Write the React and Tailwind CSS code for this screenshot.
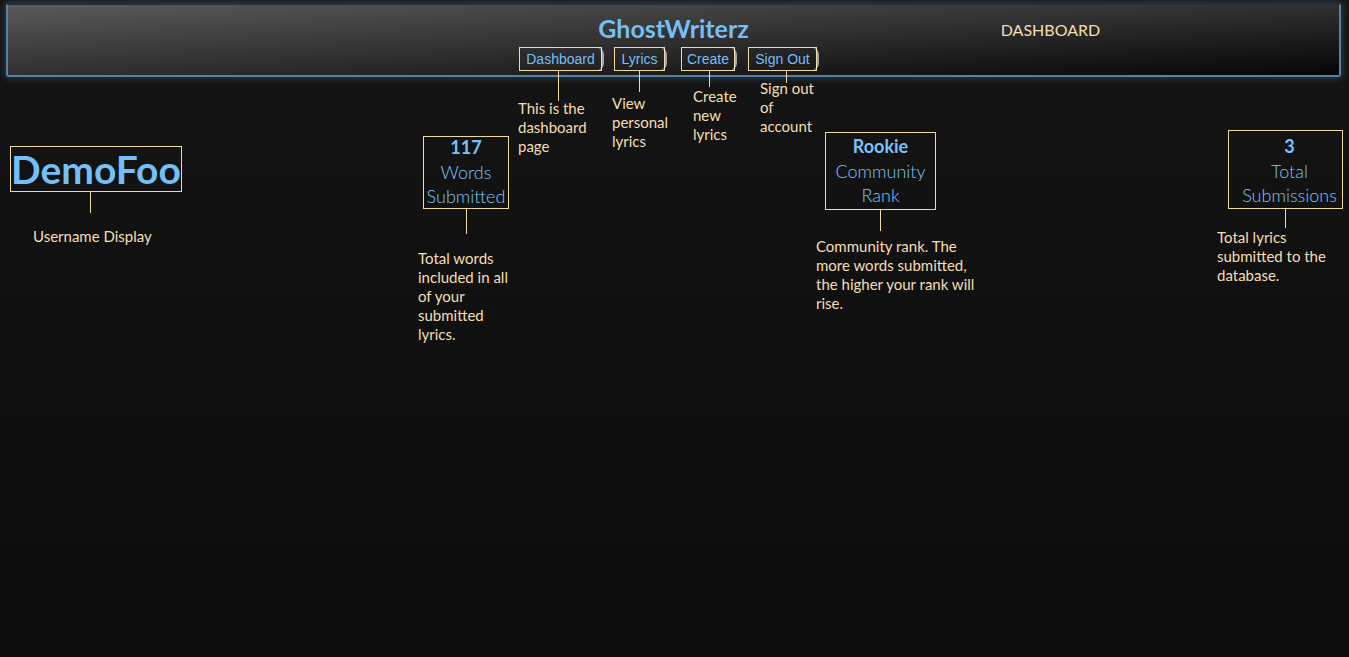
import React from 'react'

const body = { fontFamily: 'Lato, "Open Sans", sans-serif' }
const arial = { fontFamily: '"Liberation Sans", Arial, sans-serif' }

const navItems = [
  { label: 'Dashboard', tip: 'This is the dashboard page', col: 'w-[83px]', line: 'h-[30px] mr-[4px]', tipClass: 'ml-[-1px] w-[74px] mt-[-2px]' },
  { label: 'Lyrics', tip: 'View personal lyrics', col: 'w-[51px] ml-[12px]', line: 'h-[21px]', tipClass: 'ml-[-2px] w-[64px] mt-[2px]' },
  { label: 'Create', tip: 'Create new lyrics', col: 'w-[54px] ml-[16px]', line: 'h-[16px] ml-[2px]', tipClass: 'ml-[12px] w-[54px] mt-0' },
  { label: 'Sign Out', tip: 'Sign out of account', col: 'w-[69px] ml-[13px]', line: 'h-[12px] ml-[8px]', tipClass: 'ml-[12px] w-[60px] mt-[-4px]' },
]

const NavItem = ({ item }) => (
  <div className={`flex flex-col items-start shrink-0 ${item.col}`}>
    <div className="relative w-full h-[24px] border border-[#f1d9a6] flex items-center justify-center text-[14px] text-[#74bff5]" style={arial}>
      {item.label}
      <span className="absolute right-[-3px] top-[-1px] bottom-[-1px] w-[8px] rounded-r-full border-r-2 border-white/60" />
    </div>
    <div className="self-stretch flex justify-center">
      <div className={`w-px bg-[#f1d9a6] ${item.line}`} />
    </div>
    <p className={`shrink-0 text-[15px] leading-[19px] text-[#f5deb3] ${item.tipClass}`}>{item.tip}</p>
  </div>
)

const StatCard = ({ value, label, tip, wrap, box, line, tipClass }) => (
  <div className={`flex flex-col items-start shrink-0 ${wrap}`}>
    <div className={`w-full border border-[#f1d9a6] flex flex-col items-center text-[#78c2fa] ${box}`}>
      <span className="font-bold text-[18px] leading-[18px]">{value}</span>
      <span className="mt-[4px] text-[18px] leading-[24px] font-light text-center text-[#7cc6ff]">{label}</span>
    </div>
    <div className="self-stretch flex justify-center">
      <div className={`w-px bg-[#f1d9a6] ${line}`} />
    </div>
    <p className={`shrink-0 text-[15px] leading-[19px] text-[#f5deb3] ${tipClass}`}>{tip}</p>
  </div>
)

export default function App() {
  return (
    <div className="min-h-screen w-full bg-gradient-to-b from-[#151515] to-[#0b0b0b] pt-[3px] overflow-hidden" style={body}>
      {/* Header */}
      <header className="mx-[6px] w-[1335px] h-[74px] rounded-[3px] border-2 border-t-[#243038] border-[#5283a3] bg-gradient-to-br from-[#5a5a5a] via-[#303030] to-[#070707] shadow-[0_0_6px_2px_rgba(40,60,75,0.9)] relative z-10">
        <div className="grid grid-cols-[1fr_auto_1fr] items-center pt-[8px]">
          <div />
          <h1 className="text-[25px] leading-[30px] font-bold text-[#74bff5]">GhostWriterz</h1>
          <div className="pl-[252px] pt-[3px] text-[16px] text-[#f5deb3]">DASHBOARD</div>
        </div>
        <nav className="flex justify-center items-start mt-[4px] ml-[-11px]">
          {navItems.map((item) => (
            <NavItem key={item.label} item={item} />
          ))}
        </nav>
      </header>

      {/* Stats */}
      <main className="flex items-start">
        <div className="flex flex-col items-start shrink-0 w-[172px] ml-[10px] mt-[69px]">
          <div className="w-full border border-[#f1d9a6] h-[46px] flex items-center justify-center">
            <span className="text-[39px] leading-none font-bold text-[#74bff5]">DemoFoo</span>
          </div>
          <div className="self-stretch flex justify-center">
            <div className="w-px h-[21px] bg-[#f1d9a6] mr-[12px]" />
          </div>
          <p className="ml-[23px] mt-[14px] text-[15px] leading-[19px] text-[#f5deb3] whitespace-nowrap">Username Display</p>
        </div>

        <StatCard
          value="117"
          label={<>Words<br />Submitted</>}
          tip="Total words included in all of your submitted lyrics."
          wrap="w-[86px] ml-[241px] mt-[59px]"
          box="h-[73px] pt-[1px]"
          line="h-[25px]"
          tipClass="ml-[-5px] mt-[15px] w-[98px]"
        />

        <StatCard
          value="Rookie"
          label={<>Community<br />Rank</>}
          tip="Community rank. The more words submitted, the higher your rank will rise."
          wrap="w-[111px] ml-[316px] mt-[55px]"
          box="h-[78px] pt-[4px]"
          line="h-[21px]"
          tipClass="ml-[-9px] mt-[6px] w-[166px]"
        />

        <StatCard
          value="3"
          label={<>Total<br />Submissions</>}
          tip="Total lyrics submitted to the database."
          wrap="w-[115px] ml-[292px] mt-[53px]"
          box="h-[79px] pt-[6px] pl-[8px]"
          line="h-[19px]"
          tipClass="ml-[-11px] mt-0 w-[116px]"
        />
      </main>
    </div>
  )
}
